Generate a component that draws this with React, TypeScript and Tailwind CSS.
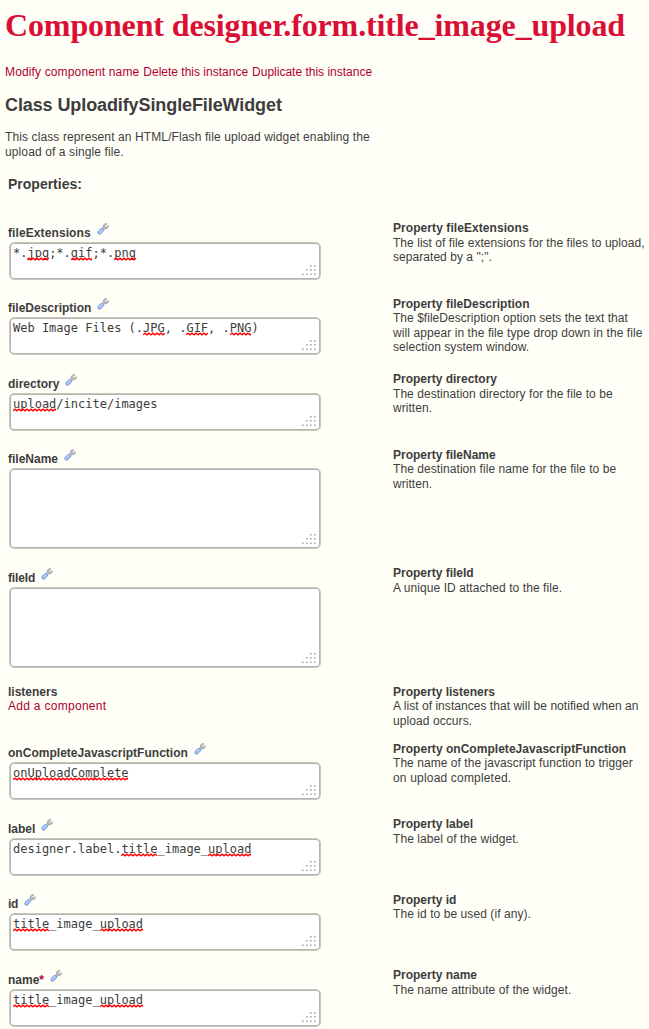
import type { ReactNode } from "react";

function Wrench() {
  return (
    <svg width="12" height="12" viewBox="0 0 12 12" className="shrink-0" fill="none">
      <path d="M8.2 3.9 5 7" stroke="#98989e" strokeWidth="2.6" />
      <path d="M8.2 3.9 5 7" stroke="#dcdce0" strokeWidth="1.1" />
      <path d="M9.9.9C8.3.4 6.5 1.1 6.3 2.9c-.1 1.7 1.2 2.9 2.7 2.7 1.6-.1 2.6-1.4 2.3-2.9L9.5 4.1 8 3.6 7.9 2.3z" fill="#cfcfd2" stroke="#9d9da1" strokeWidth=".9" />
      <path d="M5 6.9 2.5 9.5" stroke="#83a3de" strokeWidth="4.2" strokeLinecap="round" />
      <path d="M4.9 6.9 2.5 9.3" stroke="#b0caf5" strokeWidth="2.3" strokeLinecap="round" />
    </svg>
  );
}

function Grip() {
  const dots = [[9, 0], [13, 0], [5, 4], [9, 4], [13, 4], [1, 8.5], [5, 8.5], [9, 8.5], [13, 8.5]];
  return (
    <svg width="16" height="11" viewBox="0 0 16 11" className="absolute right-[3px] bottom-[3px]">
      {dots.map(([x, y]) => (
        <rect key={`${x}-${y}`} x={x} y={y} width="1.6" height="1.6" fill="#aca9a8" />
      ))}
    </svg>
  );
}

function Misspelled({ children }: { children: string }) {
  const width = children.length * 7.2;
  let d = "M0 2.8";
  for (let x = 2; x <= width + 1; x += 2) d += ` L${x} ${x % 4 === 0 ? 2.8 : 1.2}`;
  return (
    <span className="relative inline-block">
      {children}
      <svg width={width} height="4" className="absolute bottom-0 left-0" fill="none">
        <path d={d} stroke="#ff0000" strokeWidth="1.4" />
      </svg>
    </span>
  );
}

type Row = {
  name: string;
  height: string;
  track: string;
  titleTrack: string;
  box?: string;
  required?: boolean;
  value?: ReactNode;
  lines: [string, string][];
};

const M = Misspelled;
const titleImage = (
  <>
    <M>title</M>_image_<M>upload</M>
  </>
);

const rows: Row[] = [
  { name: "fileExtensions", height: "h-[75.5px]", track: "tracking-[0.1px]", titleTrack: "tracking-[0.07px]", box: "h-[38px]", value: <>*.<M>jpg</M>;*.<M>gif</M>;*.<M>png</M></>, lines: [["The list of file extensions for the files to upload,", "tracking-[0.04px]"], ['separated by a ";".', "tracking-[0.05px]"]] },
  { name: "fileDescription", height: "h-[75.5px]", track: "", titleTrack: "tracking-[0.02px]", box: "h-[38px]", value: <>Web Image Files (.<M>JPG</M>, .<M>GIF</M>, .<M>PNG</M>)</>, lines: [["The $fileDescription option sets the text that", "tracking-[0.03px]"], ["will appear in the file type drop down in the file", "tracking-[0.08px]"], ["selection system window.", "tracking-[0.06px]"]] },
  { name: "directory", height: "h-[75.5px]", track: "", titleTrack: "", box: "h-[38px]", value: <><M>upload</M>/incite/images</>, lines: [["The destination directory for the file to be", "tracking-[0.05px]"], ["written.", "tracking-[0.05px]"]] },
  { name: "fileName", height: "h-[118.5px]", track: "", titleTrack: "", box: "h-[81px]", lines: [["The destination file name for the file to be", "tracking-[0.07px]"], ["written.", "tracking-[0.05px]"]] },
  { name: "fileId", height: "h-[118.5px]", track: "tracking-[-0.15px]", titleTrack: "", box: "h-[81px]", lines: [["A unique ID attached to the file.", "tracking-[0.07px]"]] },
  { name: "listeners", height: "h-[57px]", track: "", titleTrack: "", lines: [["A list of instances that will be notified when an", "tracking-[0.04px]"], ["upload occurs.", "tracking-[0.08px]"]] },
  { name: "onCompleteJavascriptFunction", height: "h-[75.5px]", track: "tracking-[0.02px]", titleTrack: "tracking-[0.03px]", box: "h-[38px]", value: <M>onUploadComplete</M>, lines: [["The name of the javascript function to trigger", "tracking-[0.05px]"], ["on upload completed.", "tracking-[0.18px]"]] },
  { name: "label", height: "h-[75.5px]", track: "", titleTrack: "", box: "h-[38px]", value: <>designer.label.{titleImage}</>, lines: [["The label of the widget.", "tracking-[0.08px]"]] },
  { name: "id", height: "h-[75.5px]", track: "tracking-[-0.3px]", titleTrack: "", box: "h-[38px]", value: titleImage, lines: [["The id to be used (if any).", "tracking-[0.07px]"]] },
  { name: "name", height: "h-[75.5px]", track: "", titleTrack: "", box: "h-[38px]", required: true, value: titleImage, lines: [["The name attribute of the widget.", "tracking-[0.09px]"]] },
];

function PropertyRow({ row }: { row: Row }) {
  return (
    <div className={`flex shrink-0 ${row.height}`}>
      <div className="w-[385px] shrink-0">
        {row.box ? (
          <>
            <div className="flex h-[21px] items-start">
              <span className={`whitespace-nowrap pt-[4.7px] font-bold ${row.track}`}>
                {row.name}
                {row.required && <span className="text-[#b00032]">*</span>}
              </span>
              <span className="ml-[6px] pt-[2px]"><Wrench /></span>
            </div>
            <div className={`relative ml-px w-[312px] rounded-[5px] border border-[#c9c7c2] bg-white pt-[3px] pl-[3px] font-['DejaVu_Sans_Mono',monospace] text-[12px] leading-[15px] whitespace-pre shadow-[inset_0_0_0_1px_#b5b2ae] ${row.box}`}>
              {row.value}
              <Grip />
            </div>
          </>
        ) : (
          <div className="pt-[0.3px]">
            <div className="font-bold">{row.name}</div>
            <a className="tracking-[0.29px] text-[#b00032]">Add a component</a>
          </div>
        )}
      </div>
      <div className="pt-[0.3px] whitespace-nowrap">
        <div className={`font-bold ${row.titleTrack}`}>Property {row.name}</div>
        {row.lines.map(([text, track]) => (
          <div key={text} className={track}>{text}</div>
        ))}
      </div>
    </div>
  );
}

export default function App() {
  return (
    <main className="flex h-[1029px] flex-col overflow-hidden bg-[#fffff7] pl-[5px] font-['Liberation_Sans',Arial,sans-serif] text-[12px] leading-[14.4px] text-[#3d3d3d]">
      <h1 className="mt-[6px] h-[38px] font-['Liberation_Serif',serif] text-[32px] leading-[38px] font-bold tracking-[-0.13px] whitespace-nowrap text-[#d90f36]">Component designer.form.title_image_upload</h1>
      <nav className="mt-[21px] flex gap-[4px] whitespace-nowrap text-[#b00032]">
        <a className="tracking-[0.14px]">Modify component name</a>
        <a>Delete this instance</a>
        <a>Duplicate this instance</a>
      </nav>
      <h2 className="mt-[15px] text-[18px] leading-[22px] font-bold tracking-[-0.1px] whitespace-nowrap">Class UploadifySingleFileWidget</h2>
      <p className="mt-[14px] w-[380px] tracking-[0.11px]">This class represent an HTML/Flash file upload widget enabling the<br />upload of a single file.</p>
      <h3 className="mt-[17px] ml-[3px] text-[14px] leading-[17px] font-bold">Properties:</h3>
      <section className="mt-[27.7px] ml-[3px]">
        {rows.map((row) => <PropertyRow key={row.name} row={row} />)}
      </section>
    </main>
  );
}
